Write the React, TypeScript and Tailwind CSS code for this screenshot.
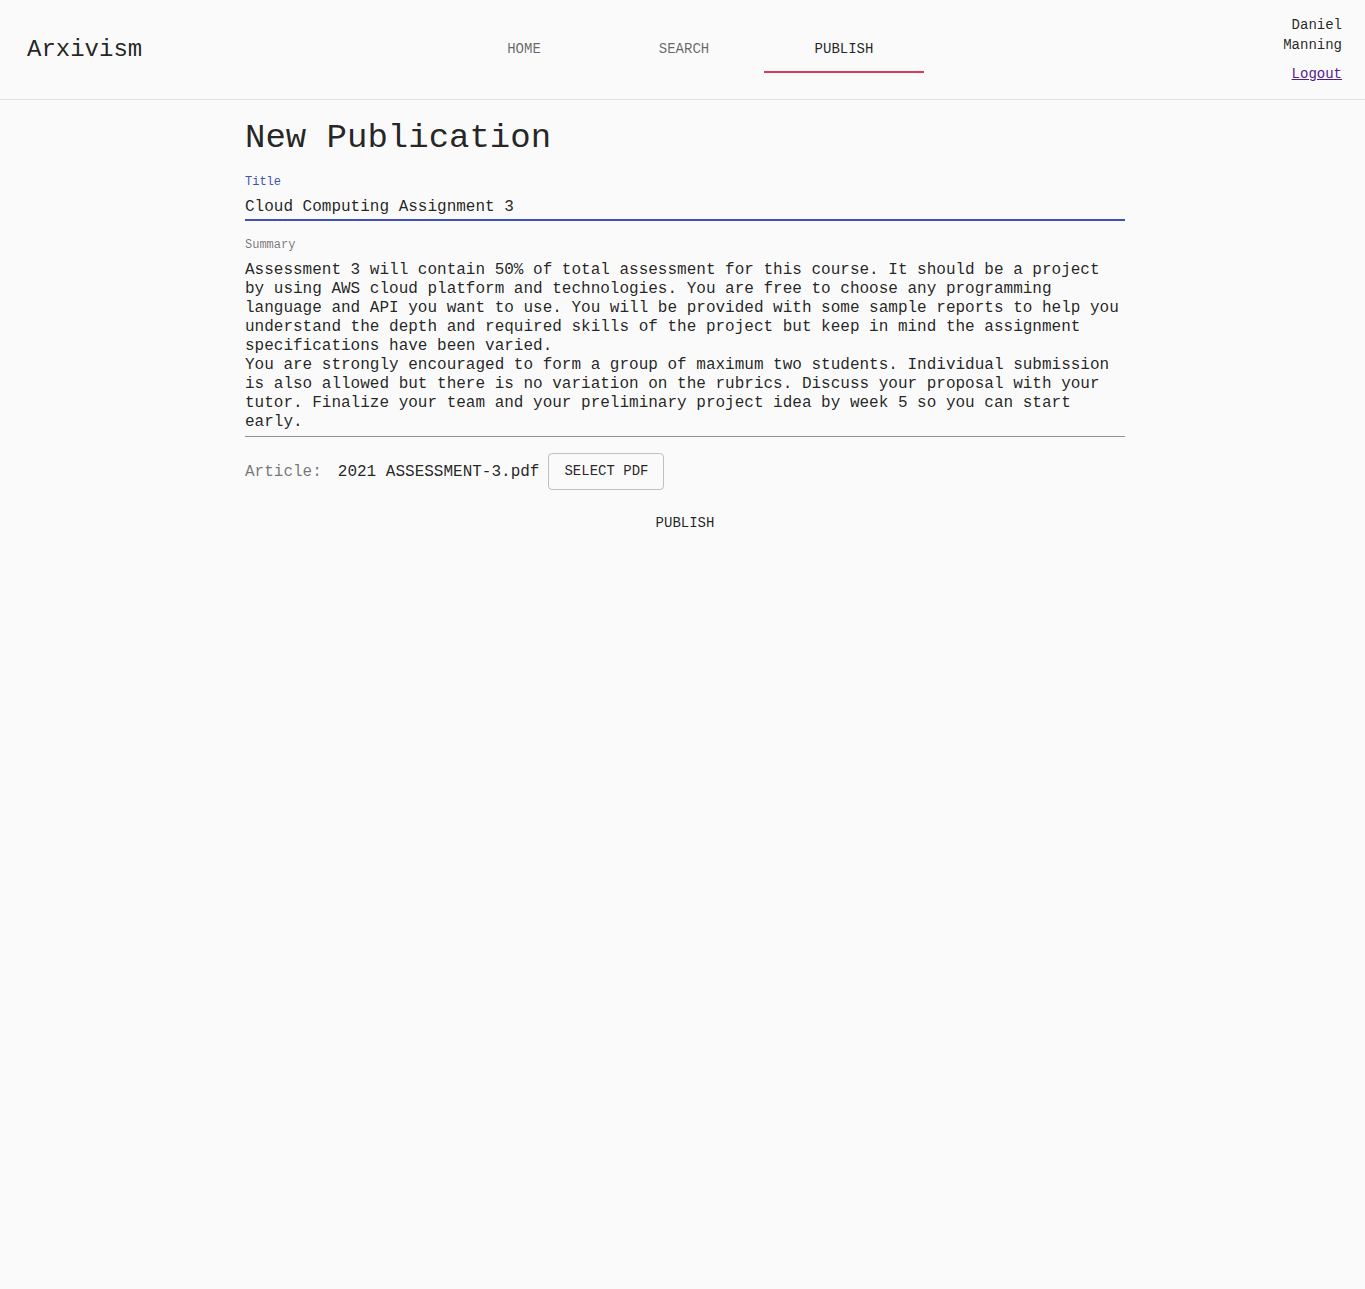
import React, { useState } from 'react';

const summaryText = `Assessment 3 will contain 50% of total assessment for this course. It should be a project by using AWS cloud platform and technologies. You are free to choose any programming language and API you want to use. You will be provided with some sample reports to help you understand the depth and required skills of the project but keep in mind the assignment specifications have been varied.
You are strongly encouraged to form a group of maximum two students. Individual submission is also allowed but there is no variation on the rubrics. Discuss your proposal with your tutor. Finalize your team and your preliminary project idea by week 5 so you can start early.`;

const tabs = ['HOME', 'SEARCH', 'PUBLISH'];

const App = () => {
    const [title, setTitle] = useState('Cloud Computing Assignment 3');
    const [summary, setSummary] = useState(summaryText);
    const active = 'PUBLISH';

    return (
        <div className="min-h-[1289px] bg-[#fafafa] text-[rgba(0,0,0,0.87)] font-['Liberation_Mono',monospace]">
            {/* Header */}
            <header className="h-[100px] border-b border-[#e0e0e0] flex items-start relative">
                <div className="absolute left-[27px] top-[35px] text-[24px] leading-[30px]">Arxivism</div>

                <nav className="mx-auto mt-[25px] pl-[3px] flex">
                    {tabs.map((t) => (
                        <div
                            key={t}
                            className={
                                t === active
                                    ? 'w-[160px] h-[48px] pt-[2px] flex items-center justify-center text-[14px] text-[rgba(0,0,0,0.87)] border-b-2 border-[#dc3a5a]'
                                    : 'w-[160px] h-[48px] pt-[2px] flex items-center justify-center text-[14px] text-[rgba(0,0,0,0.6)] border-b-2 border-transparent'
                            }
                        >
                            {t}
                        </div>
                    ))}
                </nav>

                <div className="absolute right-[23px] top-[15px] flex flex-col items-end text-[14px]">
                    <div className="text-right leading-[20px]">Daniel<br />Manning</div>
                    <a href="#" className="mt-[11px] leading-[16px] text-[#551a8b] underline">Logout</a>
                </div>
            </header>

            {/* Form */}
            <main className="w-[885px] mx-auto pt-[17px] pl-[5px]">
                <h1 className="text-[34px] leading-[42px]">New Publication</h1>

                <div className="mt-[16px]">
                    <label className="block text-[12px] leading-[14px] text-[#3f51b5]">Title</label>
                    <input
                        value={title}
                        onChange={(e) => setTitle(e.target.value)}
                        className="block w-full mt-[9px] pb-[2px] text-[16px] leading-[19px] bg-transparent outline-none border-b-2 border-[#3f51b5]"
                    />
                </div>

                <div className="mt-[17px]">
                    <label className="block text-[12px] leading-[14px] text-[rgba(0,0,0,0.54)]">Summary</label>
                    <textarea
                        value={summary}
                        rows={9}
                        onChange={(e) => setSummary(e.target.value)}
                        className="block w-full mt-[9px] pb-[4px] text-[16px] leading-[19px] bg-transparent outline-none resize-none border-b border-[rgba(0,0,0,0.42)]"
                    />
                </div>

                <div className="mt-[16px] flex items-center h-[37px] text-[16px]">
                    <span className="text-[rgba(0,0,0,0.54)]">Article:</span>
                    <span className="ml-[16px]">2021 ASSESSMENT-3.pdf</span>
                    <button className="ml-[9px] h-[37px] px-[15px] rounded border border-[rgba(0,0,0,0.23)] text-[14px]">
                        SELECT PDF
                    </button>
                </div>

                <div className="mt-[15px] flex justify-center">
                    <button className="h-[36px] px-[8px] text-[14px]">PUBLISH</button>
                </div>
            </main>
        </div>
    );
};

export default App;
